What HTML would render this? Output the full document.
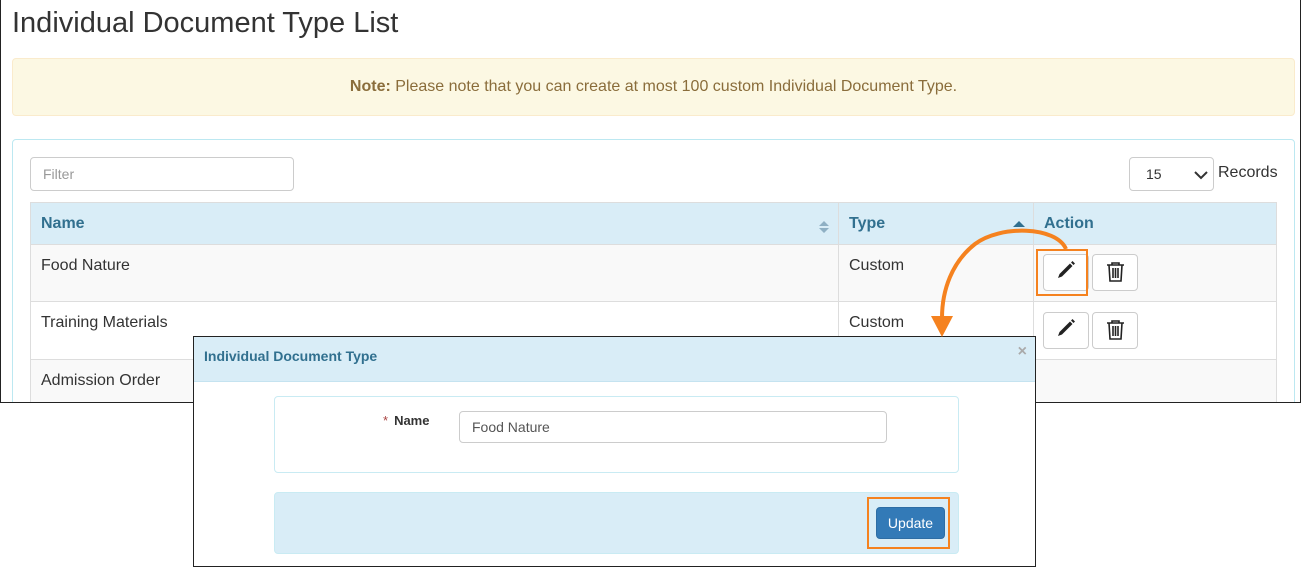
<!DOCTYPE html>
<html><head><style>
*{box-sizing:border-box;margin:0;padding:0}
body{width:1305px;height:570px;background:#fff;font-family:"Liberation Sans",Arial,sans-serif;position:relative;overflow:hidden;color:#333}
.a{position:absolute}
.frame{left:0;top:0;width:1301px;height:403px;border:1px solid #222;border-top:none;overflow:hidden;background:#fff}
.in{position:absolute;left:-1px;top:0;width:1301px;height:403px}
h1{position:absolute;left:12px;top:7px;font-size:29px;font-weight:normal;color:#333}
.note{left:12px;top:58px;width:1283px;height:58px;background:#fcf8e3;border:1px solid #faebcc;border-radius:4px;text-align:center;line-height:56px;font-size:16px;color:#8a6d3b}
.panel{left:12px;top:139px;width:1283px;height:300px;border:1px solid #bce8f1;border-radius:4px}
.inp{border:1px solid #ccc;border-radius:4px;background:#fff;font-size:14px;color:#999;padding-left:12px}
.th{background:#d9edf7;color:#31708f;font-weight:bold;font-size:16px}
.cell{border:1px solid #ddd;font-size:16px;padding:12px 10px 10px}
.btn{border:1px solid #ccc;border-radius:4px;background:#fff;width:46px;height:37px}
.or{border:2px solid #f5821f}
</style></head><body>
<div class="a frame"><div class="in">
<h1>Individual Document Type List</h1>
<div class="a note"><b>Note:</b> Please note that you can create at most 100 custom Individual Document Type.</div>
<div class="a panel"></div>
<div class="a inp" style="left:30px;top:157px;width:264px;height:34px;line-height:32px">Filter</div>
<div class="a inp" style="left:1129px;top:157px;width:85px;height:34px;line-height:32px;color:#333;padding-left:16px">15
<svg class="a" style="left:64px;top:12px" width="14" height="10"><path d="M1 2 L7 8 L13 2" stroke="#333" stroke-width="2" fill="none"/></svg></div>
<div class="a" style="left:1218px;top:164px;font-size:16px">Records</div>
<div class="a th cell" style="left:30px;top:202px;width:809px;height:43px">Name
<svg class="a" style="left:788px;top:17px" width="10" height="14"><path d="M0 6 L5 1 L10 6Z M0 8 L5 13 L10 8Z" fill="#8fb0c4"/></svg></div>
<div class="a th cell" style="left:838px;top:202px;width:196px;height:43px">Type
<svg class="a" style="left:174px;top:17px" width="12" height="8"><path d="M0 7 L6 1 L12 7Z" fill="#31708f"/></svg></div>
<div class="a th cell" style="left:1033px;top:202px;width:244px;height:43px">Action</div>
<div class="a cell" style="left:30px;top:244px;width:809px;height:58px;background:#f9f9f9">Food Nature</div>
<div class="a cell" style="left:838px;top:244px;width:196px;height:58px;background:#f9f9f9">Custom</div>
<div class="a cell" style="left:1033px;top:244px;width:244px;height:58px;background:#f9f9f9"></div>
<div class="a cell" style="left:30px;top:301px;width:809px;height:59px">Training Materials</div>
<div class="a cell" style="left:838px;top:301px;width:196px;height:59px">Custom</div>
<div class="a cell" style="left:1033px;top:301px;width:244px;height:59px"></div>
<div class="a cell" style="left:30px;top:359px;width:809px;height:58px;background:#f9f9f9">Admission Order</div>
<div class="a cell" style="left:838px;top:359px;width:196px;height:58px;background:#f9f9f9"></div>
<div class="a cell" style="left:1033px;top:359px;width:244px;height:58px;background:#f9f9f9"></div>
<div class="a btn" style="left:1043px;top:254px"></div>
<div class="a btn" style="left:1092px;top:254px"></div>
<div class="a btn" style="left:1043px;top:312px"></div>
<div class="a btn" style="left:1092px;top:312px"></div>
<svg class="a" style="left:0;top:0" width="1301" height="403">
<path d="M1058 278 L1059.5 274 L1070 263.5 L1072.5 266 L1062 276.5 Z M1071 262.5 L1072.5 261 L1075 263.5 L1073.5 265 Z" fill="#222"/>
<path d="M1058 336 L1059.5 332 L1070 321.5 L1072.5 324 L1062 334.5 Z M1071 320.5 L1072.5 319 L1075 321.5 L1073.5 323 Z" fill="#222"/>
<g fill="none" stroke="#222" stroke-width="1.6"><path d="M1107 265 h17 M1112 265 v-2 h7 v2 M1109 265 l1 16 h11 l1 -16 M1113 268 v10 M1115.5 268 v10 M1118 268 v10"/>
<path d="M1107 323 h17 M1112 323 v-2 h7 v2 M1109 323 l1 16 h11 l1 -16 M1113 326 v10 M1115.5 326 v10 M1118 326 v10"/></g>
</svg>
<div class="a or" style="left:1036px;top:249px;width:52px;height:47px"></div>
</div></div>
<div class="a" style="left:193px;top:336px;width:843px;height:231px;border:1px solid #222;background:#fff">
<div class="a" style="left:0;top:0;width:841px;height:45px;background:#d9edf7;border-bottom:1px solid #c5e3f0;color:#31708f;font-weight:bold;font-size:14px;padding:11px 10px">Individual Document Type</div>
<div class="a" style="right:8px;top:6px;color:#aaa;font-size:16px;font-weight:bold">×</div>
<div class="a" style="left:80px;top:59px;width:685px;height:77px;border:1px solid #c9ebf3;border-radius:4px"></div>
<div class="a" style="left:189px;top:76px;font-size:13px;font-weight:bold"><span style="color:#a94442;font-weight:normal;margin-right:6px">*</span>Name</div>
<div class="a inp" style="left:265px;top:74px;width:428px;height:32px;line-height:30px;color:#555">Food Nature</div>
<div class="a" style="left:80px;top:155px;width:685px;height:62px;background:#d9edf7;border:1px solid #c9ebf3;border-radius:4px"></div>
<div class="a" style="left:682px;top:170px;width:69px;height:32px;background:#337ab7;border:1px solid #2e6da4;border-radius:4px;color:#fff;font-size:14px;text-align:center;line-height:30px">Update</div>
<div class="a or" style="left:673px;top:160px;width:83px;height:52px"></div>
</div>
<svg class="a" style="left:0;top:0" width="1305" height="570">
<path d="M1066 249 C1056 226 1000 225 975 244 C952 262 942 290 942 318" fill="none" stroke="#f5821f" stroke-width="4"/>
<path d="M931 316 L953 316 L942 337 Z" fill="#f5821f"/>
</svg>
</body></html>
